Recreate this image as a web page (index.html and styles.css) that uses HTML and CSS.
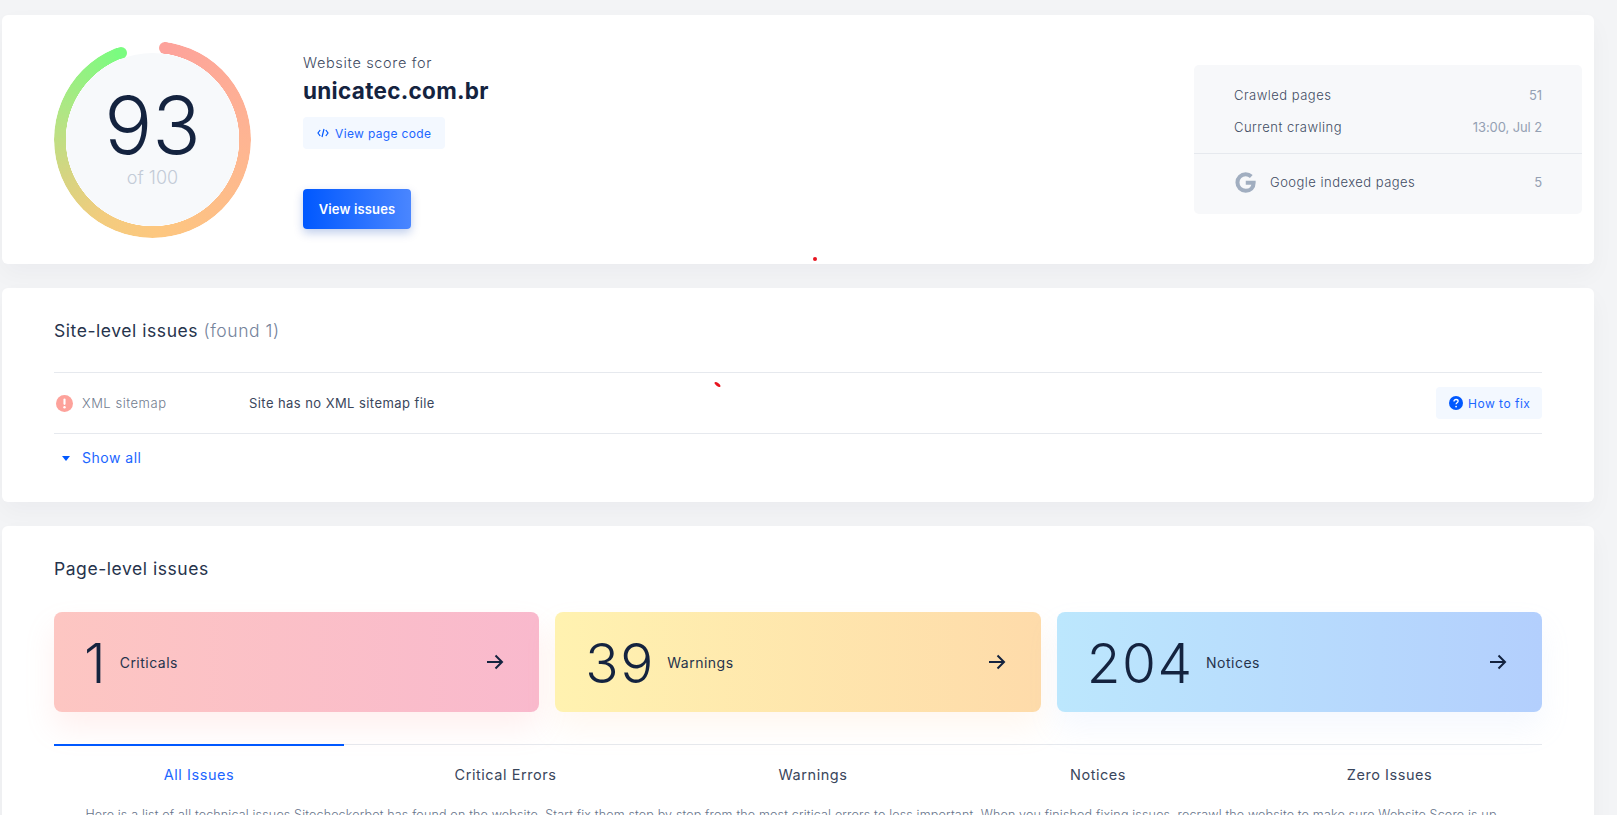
FILE: index.html
```html
<!DOCTYPE html>
<html lang="en">
<head>
<meta charset="utf-8">
<title>Website score</title>
<link rel="stylesheet" href="styles.css">
</head>
<body>
<main class="page">
  <section class="card score-card">
    <div class="ring">
      <div class="ring-arc"></div>
      <span class="cap cap-start"></span>
      <span class="cap cap-end"></span>
      <div class="ring-face">
        <div class="ring-value">93</div>
        <div class="ring-of">of 100</div>
      </div>
    </div>
    <div class="score-info">
      <div class="score-label">Website score for</div>
      <div class="score-domain">unicatec.com.br</div>
      <a class="soft-btn code-btn">
        <svg class="code-icon" viewBox="0 0 12 10" width="12" height="10"><path d="M3.2 2 1 5l2.2 3M8.8 2 11 5 8.8 8M7 1 5 9" fill="none" stroke="currentColor" stroke-width="1.2"/></svg>
        View page code
      </a>
      <a class="primary-btn">View issues</a>
    </div>
    <aside class="stats">
      <div class="stats-top">
        <div class="stat-row"><span>Crawled pages</span><span class="stat-val">51</span></div>
        <div class="stat-row"><span>Current crawling</span><span class="stat-val">13:00, Jul 2</span></div>
      </div>
      <div class="stats-bottom">
        <div class="stat-row">
          <span class="google">
            <svg viewBox="0 0 24 24" width="21" height="21"><path fill="none" stroke="#a1aec0" stroke-width="4.600" d="M12.300 12.200h9c0 5.600-3.700 9.200-9.100 9.200a9.400 9.400 0 0 1 0-18.800c2.600 0 4.700.9 6.400 2.500"/></svg>
            Google indexed pages
          </span>
          <span class="stat-val">5</span>
        </div>
      </div>
    </aside>
  </section>

  <section class="card site-card">
    <h2 class="title">Site-level issues <span class="title-muted">(found 1)</span></h2>
    <div class="issue-row">
      <svg class="alert" viewBox="0 0 16 16" width="17" height="17"><circle cx="8" cy="8" r="8" fill="#fda29b"/><rect x="7" y="3.300" width="2" height="6" rx="1" fill="#fff"/><circle cx="8" cy="11.600" r="1.150" fill="#fff"/></svg>
      <span class="issue-name">XML sitemap</span>
      <span class="issue-text">Site has no XML sitemap file</span>
      <a class="soft-btn fix-btn">
        <svg viewBox="0 0 16 16" width="14" height="14"><circle cx="8" cy="8" r="8" fill="#0058ff"/><path d="M5.700 6.200c0-1.400 1-2.200 2.400-2.200s2.300.8 2.300 2c0 1.800-2.300 1.800-2.300 3.400" fill="none" stroke="#fff" stroke-width="1.500"/><circle cx="8.100" cy="12" r="1" fill="#fff"/></svg>
        How to fix
      </a>
    </div>
    <a class="show-all"><span class="caret"></span>Show all</a>
  </section>

  <section class="card page-card">
    <h2 class="title">Page-level issues</h2>
    <div class="tiles">
      <a class="tile tile-red">
        <span class="tile-num">1</span><span class="tile-label">Criticals</span>
        <svg class="arrow" viewBox="0 0 18 16" width="18" height="16"><path d="M1 8h15M9.500 1.500 16 8l-6.500 6.500" fill="none" stroke="#14233f" stroke-width="2"/></svg>
      </a>
      <a class="tile tile-yellow">
        <span class="tile-num">39</span><span class="tile-label">Warnings</span>
        <svg class="arrow" viewBox="0 0 18 16" width="18" height="16"><path d="M1 8h15M9.500 1.500 16 8l-6.500 6.500" fill="none" stroke="#14233f" stroke-width="2"/></svg>
      </a>
      <a class="tile tile-blue">
        <span class="tile-num">204</span><span class="tile-label">Notices</span>
        <svg class="arrow" viewBox="0 0 18 16" width="18" height="16"><path d="M1 8h15M9.500 1.500 16 8l-6.500 6.500" fill="none" stroke="#14233f" stroke-width="2"/></svg>
      </a>
    </div>
    <nav class="tabs">
      <a class="tab tab-active">All Issues</a>
      <a class="tab">Critical Errors</a>
      <a class="tab">Warnings</a>
      <a class="tab">Notices</a>
      <a class="tab">Zero Issues</a>
    </nav>
    <p class="intro">Here is a list of all technical issues Sitecheckerbot has found on the website. Start fix them step by step from the most critical errors to less important. When you finished fixing issues, recrawl the website to make sure Website Score is up</p>
  </section>
</main>
<span class="mark mark-a"></span>
<span class="mark mark-b"></span>
</body>
</html>
```
FILE: styles.css
```css
* { box-sizing: border-box; }
html, body { height: 100%; }
body {
  margin: 0;
  overflow: hidden;
  background: #f3f4f6;
  color: #14233f;
  font-family: Inter, "Open Sans", "Liberation Sans", sans-serif;
}
a { display: block; }

.page {
  display: flex;
  flex-direction: column;
  gap: 24px;
  padding: 15px 23px 0 2px;
}
.card {
  background: #fff;
  border-radius: 6px;
  box-shadow: 0 10px 24px rgba(20, 30, 50, 0.035);
}

/* score card */
.score-card {
  display: flex;
  align-items: flex-start;
  height: 249px;
  padding: 26px 12px 26px 52px;
}
.ring {
  position: relative;
  flex: none;
  width: 197px;
  height: 197px;
}
.ring-arc {
  position: absolute;
  inset: 0;
  border-radius: 50%;
  background: conic-gradient(from 7deg, #fda29b 0deg, #feb592 85deg, #fdc77f 170deg, #f3cc7e 205deg, #d6d481 240deg, #b0e684 280deg, #7afc80 332deg, transparent 332deg);
  -webkit-mask: radial-gradient(closest-side, transparent 86.500px, #000 87px);
  mask: radial-gradient(closest-side, transparent 86.500px, #000 87px);
}
.cap {
  position: absolute;
  width: 12px;
  height: 12px;
  border-radius: 50%;
}
.cap-start { left: 105px; top: 0.500px; background: #fda29b; }
.cap-end { left: 61px; top: 6px; background: #7afc80; }
.ring-face {
  position: absolute;
  inset: 12px;
  display: flex;
  flex-direction: column;
  align-items: center;
  border-radius: 50%;
  background: #f7f9fb;
}
.ring-value {
  margin-top: 31px;
  font-size: 80px;
  font-weight: 300;
  line-height: 82px;
  letter-spacing: 0;
}
.ring-of {
  font-size: 18px;
  font-weight: 300;
  line-height: 24px;
  color: #c3cbd7;
}
.score-info {
  flex: none;
  margin-left: 52px;
  padding-top: 11px;
}
.score-label {
  font-size: 14.500px;
  font-weight: 300;
  line-height: 22px;
  color: #3f4c63;
  letter-spacing: 0.65px;
}
.score-domain {
  margin-top: 2px;
  font-size: 22.500px;
  font-weight: 700;
  line-height: 30px;
  letter-spacing: 0.3px;
}
.soft-btn {
  display: flex;
  align-items: center;
  background: #f3f8ff;
  border-radius: 4px;
  color: #1c66ff;
  font-size: 12px;
  height: 32px;
}
.code-btn {
  width: 142px;
  margin-top: 11px;
  padding-left: 14px;
  gap: 6px;
  letter-spacing: 0.35px;
}
.code-icon { color: #0058ff; }
.primary-btn {
  width: 108px;
  height: 40px;
  margin-top: 40px;
  border-radius: 4px;
  background: linear-gradient(90deg, #0058ff, #4a86ff);
  box-shadow: 0 4px 10px rgba(0, 60, 180, 0.25);
  color: #fff;
  font-size: 13px;
  font-weight: 600;
  line-height: 40px;
  text-align: center;
  letter-spacing: 0.15px;
}
.stats {
  width: 388px;
  height: 149px;
  margin-top: 24px;
  margin-left: auto;
  border-radius: 5px;
  background: #f7f8fa;
  font-size: 13px;
  font-weight: 300;
  color: #3f4c63;
  letter-spacing: 0.48px;
}
.stats-top {
  display: flex;
  flex-direction: column;
  gap: 10px;
  height: 89px;
  padding: 19px 40px 0;
  border-bottom: 1px solid #e6e9ee;
}
.stats-bottom { padding: 17px 40px 0; }
.stat-row {
  display: flex;
  align-items: center;
  justify-content: space-between;
  height: 22px;
}
.stat-val { color: #94a0b3; font-weight: 400; letter-spacing: -0.1px; }
.google {
  display: flex;
  align-items: center;
  gap: 14px;
  margin-left: 1px;
}

/* site-level */
.site-card {
  height: 214px;
  padding: 31px 52px 0;
}
.title {
  margin: 0;
  font-size: 17.500px;
  font-weight: 400;
  line-height: 24px;
  color: #26334c;
  letter-spacing: 0.55px;
}
.title-muted { color: #75839b; font-weight: 300; }
.issue-row {
  display: flex;
  align-items: center;
  height: 62px;
  margin-top: 29px;
  border-top: 1px solid #e6e9ee;
  border-bottom: 1px solid #e6e9ee;
  font-size: 13px;
  letter-spacing: 0.43px;
}
.alert { margin-left: 2px; flex: none; }
.issue-name { width: 167px; margin-left: 9px; color: #717c8f; font-weight: 300; letter-spacing: 0.53px; }
.issue-text { color: #3a465c; }
.fix-btn {
  width: 106px;
  margin-left: auto;
  padding-left: 13px;
  gap: 5px;
  letter-spacing: 0.5px;
}
.show-all {
  display: flex;
  align-items: center;
  margin-top: 12px;
  color: #1c66ff;
  font-size: 14px;
  line-height: 24px;
  letter-spacing: 0.5px;
}
.caret {
  width: 0;
  height: 0;
  margin: 0 12px 0 8px;
  border-left: 4px solid transparent;
  border-right: 4px solid transparent;
  border-top: 5px solid #0058ff;
}

/* page-level */
.page-card {
  height: 500px;
  padding: 31px 52px 0;
}
.tiles {
  display: flex;
  gap: 16px;
  margin-top: 31px;
}
.tile {
  flex: 1;
  display: flex;
  align-items: center;
  height: 100px;
  padding: 2px 35px 0 30px;
  border-radius: 8px;
}
.tile-red { background: linear-gradient(90deg, #fdc6c2, #f9b9cd); box-shadow: 0 16px 30px rgba(253, 162, 155, 0.16); }
.tile-yellow { background: linear-gradient(90deg, #fff2b0, #fedbaa); box-shadow: 0 16px 30px rgba(253, 200, 150, 0.14); }
.tile-blue { background: linear-gradient(90deg, #bce7fd, #b3cffd); box-shadow: 0 16px 30px rgba(170, 200, 250, 0.12); }
.tile-num {
  font-size: 55px;
  font-weight: 300;
  line-height: 60px;
  letter-spacing: 1.500px;
}
.tile-label {
  margin: -2px 0 0 12.500px;
  font-size: 14px;
  color: #26334c;
  letter-spacing: 0.5px;
}
.arrow { margin: -2px 0 0 auto; }
.tabs {
  display: grid;
  grid-template-columns: 290px 323px 292px 278px 305px;
  margin-top: 32px;
  border-top: 1px solid #e6e9ee;
}
.tab {
  height: 61px;
  margin-top: -1px;
  padding-top: 18px;
  border-top: 2px solid transparent;
  font-size: 14.500px;
  line-height: 22px;
  text-align: center;
  color: #3a465c;
  letter-spacing: 0.55px;
}
.tab-active { border-top-color: #0058ff; color: #1c66ff; }
.intro {
  margin: 0;
  padding-right: 14px;
  font-size: 12.500px;
  font-weight: 300;
  line-height: 20px;
  text-align: center;
  color: #66738a;
  letter-spacing: 0.17px;
  white-space: nowrap;
}

/* stray marks on the capture */
.mark {
  position: absolute;
  background: #e8141f;
  border-radius: 50%;
}
.mark-a { left: 813px; top: 257px; width: 4px; height: 4px; }
.mark-b { left: 714px; top: 383px; width: 7px; height: 3px; transform: rotate(38deg); }
```
